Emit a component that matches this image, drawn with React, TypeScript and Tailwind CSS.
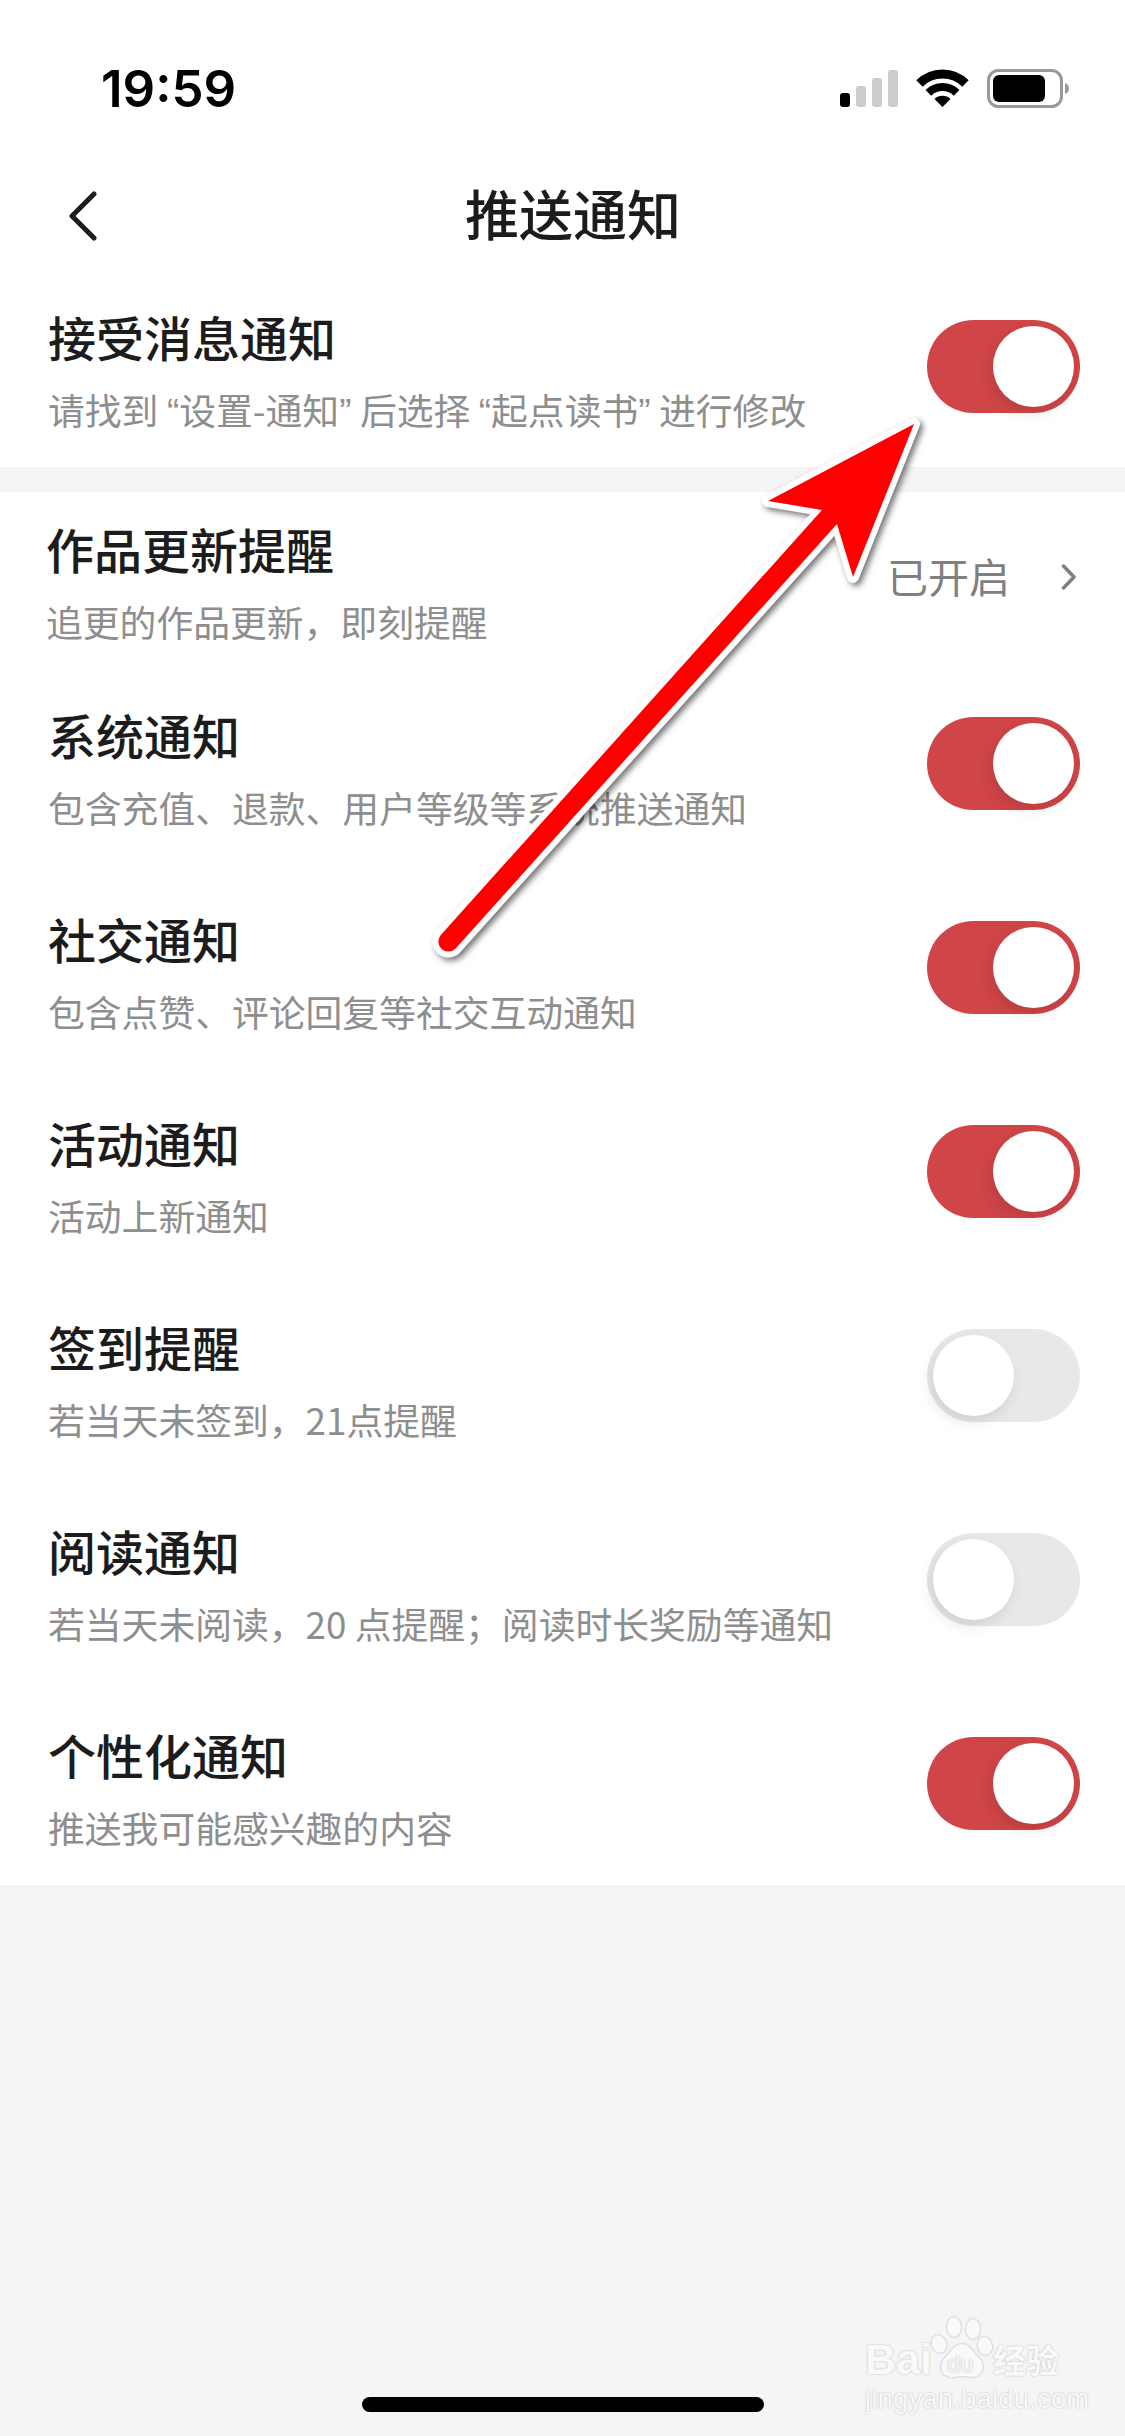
import React from "react";

interface RowData {
  title: string;
  desc: React.ReactNode;
  on: boolean;
}

const OpenQuote = () => <span className="ml-[8.5px] font-['Liberation_Sans',sans-serif]">“</span>;
const CloseQuote = () => <span className="mr-[8.5px] font-['Liberation_Sans',sans-serif]">”</span>;

const rows: Array<RowData> = [
  { title: "系统通知", desc: "包含充值、退款、用户等级等系统推送通知", on: true },
  { title: "社交通知", desc: "包含点赞、评论回复等社交互动通知", on: true },
  { title: "活动通知", desc: "活动上新通知", on: true },
  { title: "签到提醒", desc: "若当天未签到，21点提醒", on: false },
  { title: "阅读通知", desc: "若当天未阅读，20 点提醒；阅读时长奖励等通知", on: false },
  { title: "个性化通知", desc: "推送我可能感兴趣的内容", on: true },
];

const Toggle: React.FC<{ on: boolean }> = ({ on }) => (
  <div
    className={
      on
        ? "flex h-[93px] w-[153px] shrink-0 items-center justify-end rounded-full bg-[#d04547] p-[6px]"
        : "flex h-[93px] w-[153px] shrink-0 items-center justify-start rounded-full bg-[#e8e8e8] p-[6px]"
    }
  >
    <div className="h-[81px] w-[81px] rounded-full bg-white shadow-[-3px_6px_14px_rgba(0,0,0,0.1)]" />
  </div>
);

const RowText: React.FC<{ title: string; desc: React.ReactNode }> = ({ title, desc }) => (
  <div className="mt-[15px] flex flex-col gap-[13px]">
    <div className="text-[48px] leading-[60px] font-medium text-[#1c1c1c]">{title}</div>
    <div className="text-[36.8px] leading-[60px] whitespace-nowrap text-[#8e8e8e]">{desc}</div>
  </div>
);

const StatusIcons = () => (
  <svg className="mt-[6px]" width="232" height="44" viewBox="838 66 232 44">
    <rect x="840" y="93" width="10" height="14" rx="3" fill="#000" />
    <rect x="856" y="86" width="10" height="21" rx="3" fill="#ccc" />
    <rect x="872" y="78" width="10" height="29" rx="3" fill="#ccc" />
    <rect x="888" y="70" width="10" height="37" rx="3" fill="#ccc" />
    <path d="M919.5 83.5A32.5 32.5 0 0 1 965.5 83.5" fill="none" stroke="#000" strokeWidth="9" />
    <path d="M928.4 92.9A20 20 0 0 1 956.6 92.9" fill="none" stroke="#000" strokeWidth="8" />
    <path d="M942.5 107L934.5 99A11.3 11.3 0 0 1 950.5 99Z" fill="#000" />
    <rect x="988.5" y="70.5" width="73" height="36" rx="10" fill="none" stroke="#999" strokeWidth="3" />
    <rect x="993" y="75" width="52" height="27" rx="6" fill="#000" />
    <path d="M1065 83C1068 84 1069 86 1069 88.5C1069 91 1068 93 1065 94Z" fill="#999" />
  </svg>
);

const Arrow = () => (
  <svg
    className="pointer-events-none absolute top-0 left-0 drop-shadow-[3px_3px_3px_rgba(0,0,0,0.55)]"
    width="1125"
    height="1000"
    viewBox="0 0 1125 1000"
  >
    <path
      d="M914 424L768 501L822 510L440.6 935.3A10 10 0 0 0 455.4 948.7L837 524L853 577Z"
      fill="#ff0000"
      stroke="#fff"
      strokeWidth="12"
      strokeLinejoin="round"
      className="[paint-order:stroke]"
    />
  </svg>
);

const Watermark = () => (
  <div className="absolute top-[2317px] left-[865px] flex w-[205px] flex-col text-[#f9f9f9] [text-shadow:0_0_2px_#b5b5b5]">
    <div className="flex h-[61px] items-end whitespace-nowrap">
      <span className="text-[43px] leading-[38px] font-bold font-['Liberation_Sans',sans-serif]">Bai</span>
      <div className="relative h-[61px] w-[60px] shrink-0">
        <svg className="drop-shadow-[0_0_1px_#a8a8a8]" width="60" height="61" viewBox="0 0 60 61" fill="#f9f9f9">
          <ellipse cx="7" cy="27" rx="7" ry="9" transform="rotate(-20 7 27)" />
          <ellipse cx="22" cy="10" rx="7" ry="10" />
          <ellipse cx="41" cy="12" rx="7" ry="10" />
          <ellipse cx="53" cy="29" rx="7" ry="9" transform="rotate(-15 53 29)" />
          <path d="M30 27C38 27 42 36 48 42C54 49 50 60 40 60C35 60 33 59 30 59C27 59 25 60 20 60C10 60 6 50 12 42C18 36 22 27 30 27Z" />
        </svg>
        <span className="absolute top-[36px] left-[15px] text-[24px] leading-[22px] text-[#f5f5f5] font-['Liberation_Sans',sans-serif]">du</span>
      </div>
      <span className="ml-[1px] text-[33px] leading-[38px] font-bold">经验</span>
    </div>
    <div className="mt-[6px] text-[27px] leading-[30px] tracking-[0.4px] whitespace-nowrap font-['Liberation_Sans',sans-serif]">
      jingyan.baidu.com
    </div>
  </div>
);

export default function App() {
  return (
    <div className="relative flex h-[2436px] w-[1125px] flex-col overflow-hidden bg-[#f5f5f5] font-['Noto_Sans_CJK_SC','Noto_Sans',sans-serif]">
      <div className="bg-white">
        <div className="flex h-[150px] items-start justify-between pt-[60px] pl-[101px] pr-[55px]">
          <span className="mt-[1px] text-[51px] leading-[56px] font-semibold text-black font-['Inter',sans-serif]">19:59</span>
          <StatusIcons />
        </div>

        <div className="flex h-[114px] items-center pt-[12px]">
          <svg className="mt-[6px] ml-[67px]" width="30" height="50" viewBox="0 0 30 50" fill="none">
            <path d="M27 3L5 25L27 47" stroke="#1c1c1c" strokeWidth="5" strokeLinecap="round" strokeLinejoin="round" />
          </svg>
          <div className="ml-[368px] text-[54px] leading-[70px] font-medium text-[#1c1c1c]">推送通知</div>
        </div>

        <div className="flex h-[203px] items-center justify-between pt-[2px] pl-[48px] pr-[45px]">
          <RowText
            title="接受消息通知"
            desc={
              <>
                请找到
                <OpenQuote />
                设置-通知
                <CloseQuote />
                后选择
                <OpenQuote />
                起点读书
                <CloseQuote />
                进行修改
              </>
            }
          />
          <Toggle on />
        </div>
      </div>

      <div className="mt-[25px] bg-white">
        <div className="flex h-[169px] items-center justify-between pl-[46px] pr-[48px]">
          <RowText title="作品更新提醒" desc="追更的作品更新，即刻提醒" />
          <div className="flex items-center gap-[51px] text-[41px] leading-[50px] text-[#808080]">
            <span className="mb-[4px]">已开启</span>
            <svg width="16" height="26" viewBox="0 0 16 26" fill="none">
              <path d="M2.5 2L13 13L2.5 24" stroke="#808080" strokeWidth="3.5" strokeLinecap="round" strokeLinejoin="round" />
            </svg>
          </div>
        </div>

        {rows.map((row) => (
          <div key={row.title} className="flex h-[204px] items-center justify-between pl-[48px] pr-[45px]">
            <RowText title={row.title} desc={row.desc} />
            <Toggle on={row.on} />
          </div>
        ))}
      </div>

      <div className="mt-auto mb-[24px] ml-[1px] h-[15px] w-[402px] self-center rounded-full bg-black" />

      <Arrow />
      <Watermark />
    </div>
  );
}
